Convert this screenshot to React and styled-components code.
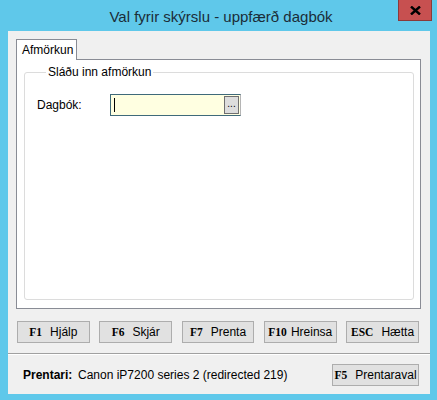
import React from "react";
import styled, { createGlobalStyle } from "styled-components";

const Global = createGlobalStyle`
  html, body { margin: 0; padding: 0; background: #5cc8ea; }
  #root { width: 437px; height: 400px; }
`;

const Window = styled.div`
  width: 437px;
  height: 400px;
  box-sizing: border-box;
  background: #5fc8ea;
  padding: 0 7px 6px 8px;
  display: flex;
  flex-direction: column;
  font-family: "Liberation Sans", Arial, sans-serif;
`;

const TitleBar = styled.div`
  position: relative;
  height: 31px;
  flex: none;
  display: flex;
  align-items: center;
  justify-content: center;
`;

const Title = styled.div`
  font-size: 15px;
  color: #1b2d38;
  padding-left: 4px;
  padding-top: 2px;
`;

const CloseBtn = styled.div`
  position: absolute;
  top: 0;
  right: -2px;
  width: 32px;
  height: 20px;
  background: #c75050;
  border: 1px solid #8a3a3a;
  border-top: none;
  display: flex;
  align-items: center;
  justify-content: center;
`;

const Client = styled.div`
  flex: 1;
  background: #f0f0f0;
  display: flex;
  flex-direction: column;
  padding-top: 8px;
`;

const TabArea = styled.div`
  margin: 0 9px 0 8px;
  display: flex;
  flex-direction: column;
`;

const TabStrip = styled.div`
  display: flex;
  height: 20px;
`;

const Tab = styled.div`
  width: 61px;
  height: 21px;
  box-sizing: border-box;
  border: 1px solid #898c95;
  border-bottom: none;
  background: #ffffff;
  font-size: 12px;
  color: #000;
  padding: 3px 0 0 5px;
  position: relative;
  z-index: 1;
`;

const Panel = styled.div`
  height: 250px;
  box-sizing: border-box;
  border: 1px solid #898c95;
  background: #ffffff;
  padding: 5px 6px 8px 7px;
  display: flex;
`;

const Group = styled.fieldset`
  flex: 1;
  margin: 0;
  min-width: 0;
  border: 1px solid #dcdcdc;
  border-radius: 3px;
  padding: 15px 0 0 12px;
  display: flex;
  flex-direction: column;
`;

const Legend = styled.legend`
  font-size: 12px;
  color: #000;
  padding: 0 2px;
  margin-left: 9px;
`;

const FieldRow = styled.div`
  display: flex;
  align-items: center;
  height: 22px;
`;

const Label = styled.div`
  font-size: 12px;
  color: #000;
  width: 73px;
`;

const InputBox = styled.div`
  width: 131px;
  height: 22px;
  box-sizing: border-box;
  border: 1px solid #3f6a7a;
  border-right-color: #b5b5b5;
  background: #ffffe1;
  display: flex;
  align-items: center;
  padding: 1px 1px 1px 3px;
`;

const Caret = styled.div`
  width: 1px;
  height: 14px;
  background: #000;
`;

const DotsBtn = styled.div`
  margin-left: auto;
  width: 15px;
  height: 18px;
  box-sizing: border-box;
  border: 1px solid #707070;
  background: #dddddd;
  font-size: 10px;
  color: #000;
  display: flex;
  align-items: center;
  justify-content: center;
  line-height: 1;
  padding-bottom: 3px;
`;

const ButtonRow = styled.div`
  display: flex;
  gap: 9.5px;
  margin: 12px 11px 0 9px;
`;

const Btn = styled.div`
  width: ${(p) => p.$w || 73}px;
  height: 22px;
  box-sizing: border-box;
  background: #e1e1e1;
  border: 1px solid #adadad;
  display: flex;
  align-items: center;
  justify-content: center;
  gap: ${(p) => p.$gap || 8}px;
  font-size: 12px;
  color: #000;
`;

const Key = styled.span`
  font-family: "Liberation Serif", "Times New Roman", serif;
  font-weight: bold;
  font-size: 11.5px;
`;

const Separator = styled.div`
  margin-top: 10px;
  height: 0;
  border-top: 1px solid #a0a0a0;
  border-bottom: 1px solid #ffffff;
`;

const Footer = styled.div`
  flex: 1;
  display: flex;
  align-items: center;
  padding: 0 11px 0 15px;
`;

const PrinterLabel = styled.span`
  font-weight: bold;
  font-size: 12px;
  color: #000;
  width: 55px;
`;

const PrinterName = styled.span`
  font-size: 12px;
  color: #000;
  flex: 1;
`;

export default function App() {
  return (
    <>
      <Global />
      <Window>
        <TitleBar>
          <Title>Val fyrir skýrslu - uppfærð dagbók</Title>
          <CloseBtn>
            <svg width="11" height="9" viewBox="0 0 11 9">
              <path d="M1 0.5 L10 8.5 M10 0.5 L1 8.5" stroke="#000" strokeWidth="2.4" />
            </svg>
          </CloseBtn>
        </TitleBar>
        <Client>
          <TabArea>
            <TabStrip>
              <Tab>Afmörkun</Tab>
            </TabStrip>
            <Panel>
              <Group>
                <Legend>Sláðu inn afmörkun</Legend>
                <FieldRow>
                  <Label>Dagbók:</Label>
                  <InputBox>
                    <Caret />
                    <DotsBtn>...</DotsBtn>
                  </InputBox>
                </FieldRow>
              </Group>
            </Panel>
          </TabArea>
          <ButtonRow>
            <Btn><Key>F1</Key>Hjálp</Btn>
            <Btn><Key>F6</Key>Skjár</Btn>
            <Btn><Key>F7</Key>Prenta</Btn>
            <Btn $gap={4}><Key>F10</Key>Hreinsa</Btn>
            <Btn><Key>ESC</Key>Hætta</Btn>
          </ButtonRow>
          <Separator />
          <Footer>
            <PrinterLabel>Prentari:</PrinterLabel>
            <PrinterName>Canon iP7200 series 2 (redirected 219)</PrinterName>
            <Btn $w={87}><Key>F5</Key>Prentaraval</Btn>
          </Footer>
        </Client>
      </Window>
    </>
  );
}
